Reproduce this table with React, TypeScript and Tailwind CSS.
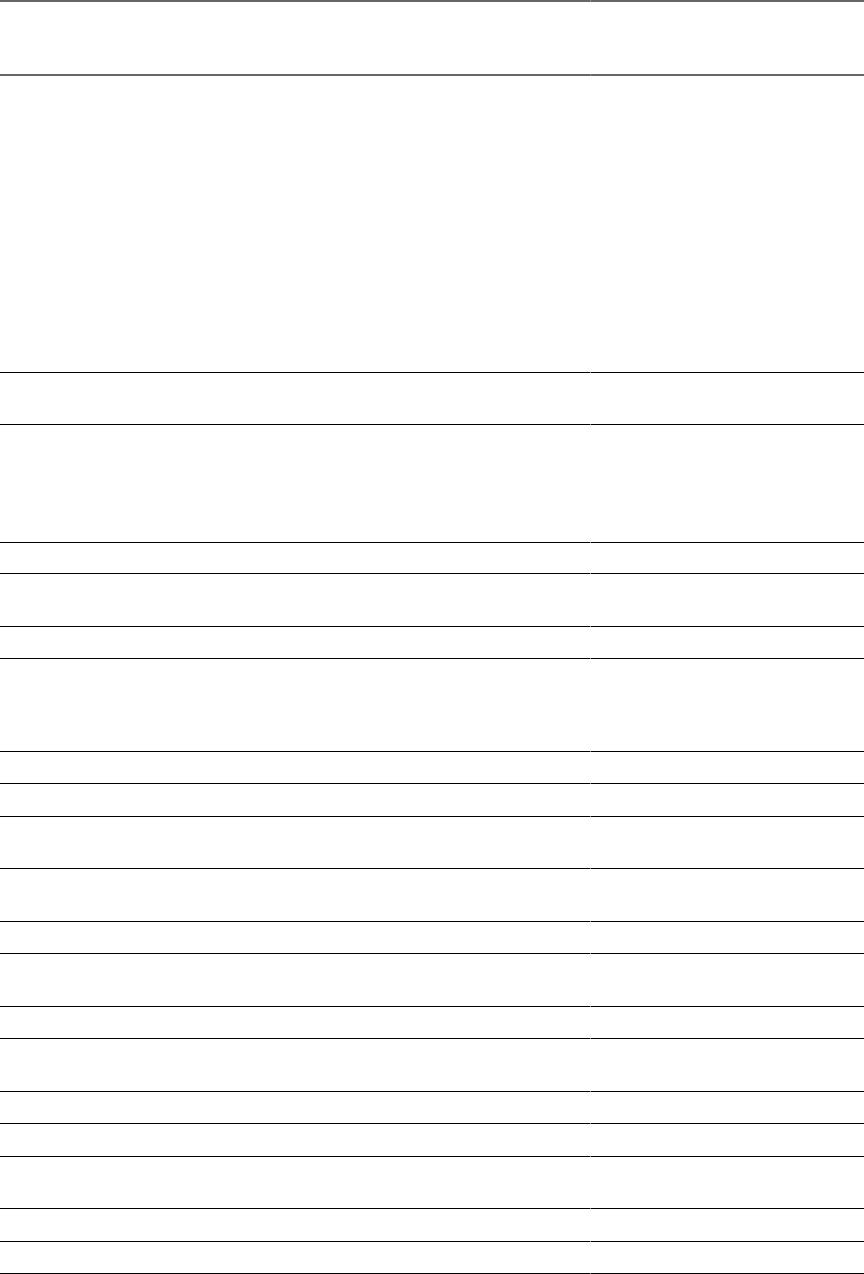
import React from "react";

// heights include the 1px bottom rule of each body row
const rows: string[] = [
  "h-[297px]",
  "h-[52px]",
  "h-[118px]",
  "h-[31px]",
  "h-[53px]",
  "h-[32px]",
  "h-[93px]",
  "h-[32px]",
  "h-[33px]",
  "h-[52px]",
  "h-[53px]",
  "h-[32px]",
  "h-[53px]",
  "h-[32px]",
  "h-[53px]",
  "h-[32px]",
  "h-[33px]",
  "h-[52px]",
  "h-[33px]",
  "h-[32px]",
];

const Row: React.FC<{ h: string }> = ({ h }) => (
  <div className={`flex ${h}`}>
    <div className="w-[590px] border-b border-black" />
    <div className="w-px border-b border-[#8a8a8a]" />
    <div className="flex-1 border-b border-black" />
  </div>
);

export default function App() {
  return (
    <div className="w-[864px] bg-white font-['Liberation_Sans',sans-serif] text-sm text-black">
      <div className="flex h-[76px]">
        <div className="w-[590px] border-y-2 border-[#666666]" />
        <div className="w-px border-y-2 border-[#8a8a8a]" />
        <div className="flex-1 border-y-2 border-[#666666]" />
      </div>
      {rows.map((h, i) => (
        <Row key={i} h={h} />
      ))}
    </div>
  );
}
